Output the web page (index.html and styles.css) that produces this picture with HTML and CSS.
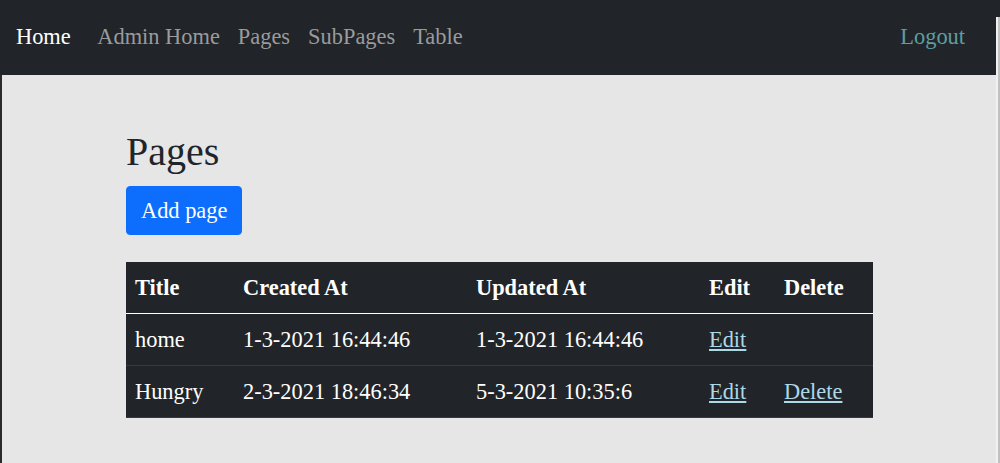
FILE: index.html
```html
<!DOCTYPE html>
<html lang="en">
<head>
<meta charset="utf-8">
<title>Pages</title>
<link rel="stylesheet" href="styles.css">
</head>
<body>
  <div class="page">
    <nav class="navbar">
      <a class="brand" href="#">Home</a>
      <ul class="nav-links">
        <li><a class="nav-link" href="#">Admin Home</a></li>
        <li><a class="nav-link" href="#">Pages</a></li>
        <li><a class="nav-link" href="#">SubPages</a></li>
        <li><a class="nav-link" href="#">Table</a></li>
      </ul>
      <a class="logout" href="#">Logout</a>
    </nav>
    <main class="main">
      <div class="container">
        <h1 class="title">Pages</h1>
        <a class="btn" href="#">Add page</a>
        <table class="table">
          <thead>
            <tr>
              <th class="c-title">Title</th>
              <th class="c-date">Created At</th>
              <th class="c-date">Updated At</th>
              <th class="c-edit">Edit</th>
              <th class="c-del">Delete</th>
            </tr>
          </thead>
          <tbody>
            <tr>
              <td>home</td>
              <td>1-3-2021 16:44:46</td>
              <td>1-3-2021 16:44:46</td>
              <td><a class="link" href="#">Edit</a></td>
              <td></td>
            </tr>
            <tr>
              <td>Hungry</td>
              <td>2-3-2021 18:46:34</td>
              <td>5-3-2021 10:35:6</td>
              <td><a class="link" href="#">Edit</a></td>
              <td><a class="link" href="#">Delete</a></td>
            </tr>
          </tbody>
        </table>
      </div>
    </main>
  </div>
  <div class="scrollbar"></div>
</body>
</html>
```

FILE: styles.css
```css
html, body {
  margin: 0;
  padding: 0;
}

body {
  display: flex;
  height: 463px;
  overflow: hidden;
  background: #212529;
  font-family: "Liberation Serif", "Times New Roman", serif;
}

.page {
  flex: 1;
  display: flex;
  flex-direction: column;
  min-width: 0;
}

.navbar {
  height: 75px;
  flex: none;
  display: flex;
  align-items: center;
  padding: 0 31px 2px 16px;
  background: #212529;
  font-size: 22.4px;
  line-height: 1.5;
  box-sizing: border-box;
}

.navbar a {
  text-decoration: none;
}

.brand {
  color: #ffffff;
  margin-right: 17.6px;
}

.nav-links {
  display: flex;
  list-style: none;
  margin: 0;
  padding: 0;
  flex: 1;
}

.nav-link {
  display: block;
  padding: 0 9px;
  color: #9a9b9d;
}

.logout {
  color: #5f9ea0;
}

.main {
  flex: 1;
  background: #e6e6e6;
  border-left: 2px solid #2b2b2b;
}

.container {
  width: 747px;
  margin-left: 124px;
  padding-top: 53px;
}

.title {
  margin: 0 0 10px;
  font-size: 40px;
  font-weight: 400;
  line-height: 1.2;
  color: #212529;
}

.btn {
  display: inline-block;
  padding: 7px 14px;
  border: 1px solid #0d6efd;
  border-radius: 4px;
  background: #0d6efd;
  color: #ffffff;
  font-size: 22.4px;
  line-height: 33px;
  text-decoration: none;
}

.table {
  margin-top: 27px;
  width: 747px;
  border-collapse: collapse;
  background: #212529;
  color: #ffffff;
  font-size: 22.4px;
  line-height: 33px;
  table-layout: fixed;
}

.table th,
.table td {
  box-sizing: border-box;
  padding: 9px 9px;
  text-align: left;
  vertical-align: top;
  border-bottom: 1px solid #373b3e;
}

.table th {
  font-weight: 700;
  border-bottom-color: #ffffff;
}

.c-title { width: 108px; }
.c-date { width: 233px; }
.c-edit { width: 75px; }
.c-del { width: 98px; }

.link {
  color: #add8e6;
  text-decoration: underline;
}

.scrollbar {
  width: 2px;
  flex: none;
  margin-top: 17px;
  background: #c1c1c1;
  border-left: 2px solid #f1f1f1;
}
```
